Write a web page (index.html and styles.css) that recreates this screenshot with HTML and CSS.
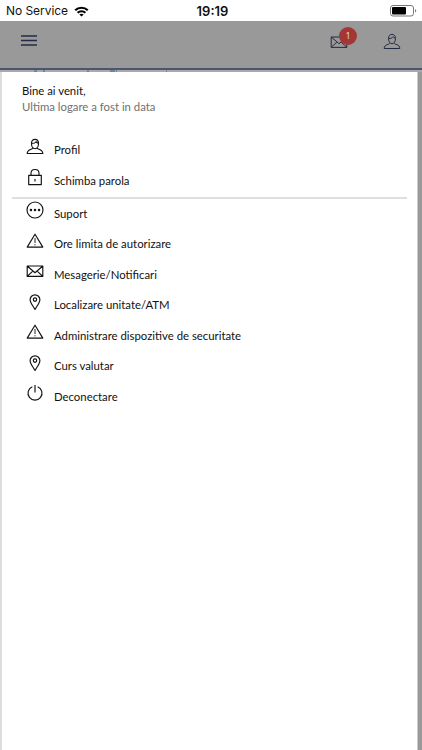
FILE: index.html
```html
<!DOCTYPE html>
<html lang="ro">
<head>
<meta charset="utf-8">
<meta name="viewport" content="width=device-width">
<title>Meniu</title>
<link rel="stylesheet" href="styles.css">
</head>
<body>
<svg class="defs" width="0" height="0" aria-hidden="true">
  <symbol id="user" viewBox="0 0 18 18"><path d="M5.500 5.500C5.500 2.800 6.800 1.400 9 1.400s3.500 1.400 3.500 4.100c0 2.800-1.500 5.200-3.500 5.200S5.500 8.300 5.500 5.500zM5.600 5.500c2.300 0 3.700-.6 4.500-1.800.5.900 1.200 1.400 2.300 1.500M6.900 10.200c-.4 1.500-5.700.9-5.700 5.300h15.600c0-4.400-5.300-3.800-5.700-5.300"/></symbol>
  <symbol id="lock" viewBox="0 0 18 18"><path d="M2.700 7.300h12.600v9.300H2.700zM5 7.300V5.200C5 .2 13 .2 13 5.200v2.100M9 11v2.500"/></symbol>
  <symbol id="dots" viewBox="0 0 18 18"><circle cx="9" cy="9" r="8"/><path class="bold" d="M4.900 9h.1M8.950 9h.1M13 9h.1"/></symbol>
  <symbol id="warning" viewBox="0 0 18 18"><path d="M9 2.200 16.800 15.100H1.200z"/><path class="thin" d="M9 6v5M9 12.200v1.200"/></symbol>
  <symbol id="mail" viewBox="0 0 18 18"><path d="M1.200 4h15.600v10.400H1.200zM1.200 4 9 10.700 16.800 4M1.200 14.400l5.600-5.300M16.800 14.400l-5.600-5.300"/></symbol>
  <symbol id="pin" viewBox="0 0 18 18"><path d="M9 16.500C7.500 13.400 4.100 9.700 4.100 6.700a4.900 4.900 0 0 1 9.800 0c0 3-3.400 6.700-4.900 9.800z"/><circle cx="9" cy="6.600" r="1.700"/></symbol>
  <symbol id="power" viewBox="0 0 18 18"><path d="M9 1v7.600M6.300 2.700a7 7 0 1 0 5.400 0"/></symbol>
</svg>
<div class="screen">
  <div class="status">
    <div class="carrier"><span>No Service</span>
      <svg class="wifi" viewBox="0 0 15 11"><path d="M1.200 4.300c3.600-3.400 9-3.400 12.600 0M3.600 6.800c2.300-2.100 5.500-2.100 7.800 0"/><path class="fill" d="M7.500 10.600 5.300 8.500c1.300-1.100 3.100-1.100 4.400 0z"/></svg>
    </div>
    <time>19:19</time>
    <svg class="battery" viewBox="0 0 27 12"><rect class="shell" x=".5" y=".5" width="23" height="10.500" rx="2.500"/><rect x="2" y="2" width="14" height="7.500" rx="1"/><path d="M25 4c1.700.5 1.700 3 0 3.500z" opacity=".5"/></svg>
  </div>
  <header class="topbar">
    <svg class="burger" viewBox="0 0 16 12"><path d="M0 1h16M0 5.500h16M0 10h16"/></svg>
    <div class="actions">
      <div class="inbox"><svg class="icon"><use href="#mail"/></svg><span class="badge">1</span></div>
      <svg class="icon"><use href="#user"/></svg>
    </div>
  </header>
  <svg class="behind" viewBox="0 0 422 2"><path d="M34 1h3M43 1h2M87 1h2M110 1h5M116 1h1M166 1h1"/></svg>
  <main class="panel">
    <section class="welcome"><p><span>Bine ai venit,</span></p><p class="muted"><span>Ultima logare a fost in data</span></p></section>
    <nav>
      <ul class="menu account">
        <li><svg class="icon"><use href="#user"/></svg><span>Profil</span></li>
        <li><svg class="icon"><use href="#lock"/></svg><span>Schimba parola</span></li>
      </ul>
      <ul class="menu">
        <li><svg class="icon"><use href="#dots"/></svg><span>Suport</span></li>
        <li><svg class="icon"><use href="#warning"/></svg><span>Ore limita de autorizare</span></li>
        <li><svg class="icon"><use href="#mail"/></svg><span>Mesagerie/Notificari</span></li>
        <li><svg class="icon"><use href="#pin"/></svg><span>Localizare unitate/ATM</span></li>
        <li><svg class="icon"><use href="#warning"/></svg><span>Administrare dispozitive de securitate</span></li>
        <li><svg class="icon"><use href="#pin"/></svg><span>Curs valutar</span></li>
        <li><svg class="icon"><use href="#power"/></svg><span>Deconectare</span></li>
      </ul>
    </nav>
  </main>
</div>
</body>
</html>
```
FILE: styles.css
```css
* { box-sizing: border-box; }
body { margin: 0; background: #999; color: #111; font: 12px/16px Lato, sans-serif; }
p, ul { margin: 0; padding: 0; }
.defs { position: absolute; }
.screen { display: flex; flex-direction: column; height: 750px; overflow: hidden; }
.status { display: grid; grid-template-columns: 1fr auto 1fr; align-items: center; height: 21px; padding: 1px 5px 0 6px; background: #fff; font: 12px/20px Inter, sans-serif; }
.carrier { display: flex; align-items: center; gap: 6px; letter-spacing: -.05px; }
.status time { font-weight: 600; font-size: 13px; margin-left: 2px; }
.wifi { width: 15px; height: 11px; fill: none; stroke: #000; stroke-width: 2.2; }
.wifi .fill { fill: #000; stroke: none; }
.battery { width: 27px; height: 12px; justify-self: end; }
.battery .shell { fill: none; stroke: #777; }
.topbar { display: flex; justify-content: space-between; height: 49px; padding: 12px 21px 0; background: #999; border-bottom: 2px solid #4d5470; }
.burger { width: 16px; height: 12px; margin-top: 2px; stroke: #252a40; stroke-width: 1.3; }
.actions { display: flex; gap: 35px; }
.inbox { position: relative; height: 18px; }
.icon { display: block; flex: none; width: 18px; height: 18px; fill: none; stroke: #111; stroke-width: 1.15; stroke-linejoin: round; }
.topbar .icon { stroke: #252a40; stroke-width: 1; }
.bold { stroke-width: 2.4; stroke-linecap: round; }
.thin { stroke-width: .9; }
.badge { position: absolute; left: 9px; top: -6px; width: 18px; height: 18px; border-radius: 50%; background: #a43735; color: #ddd; font: 9px/17px "Noto Sans", sans-serif; text-align: center; }
.behind { display: block; width: 422px; height: 2px; flex: none; background: #aaa; stroke: #40617f; stroke-width: 1; }
.panel { flex: 1; margin-right: 4px; padding: 11px 10px 0; background: #fff; border-left: 2px solid #ddd; border-right: 1px solid #ccc; }
.welcome { padding-left: 10px; }
.welcome span, .menu span { display: block; width: max-content; transform: scaleX(.946); transform-origin: left; }
.muted { color: #707070; }
.menu { list-style: none; padding-left: 14px; }
.account { margin-top: 19.500px; height: 64px; border-bottom: 2px solid #dedfe3; }
.menu li { display: flex; gap: 10px; height: 30.550px; padding-top: 3px; }
.account + .menu li { padding-top: 2.500px; }
.menu span { padding-top: 4.500px; white-space: nowrap; }
```
